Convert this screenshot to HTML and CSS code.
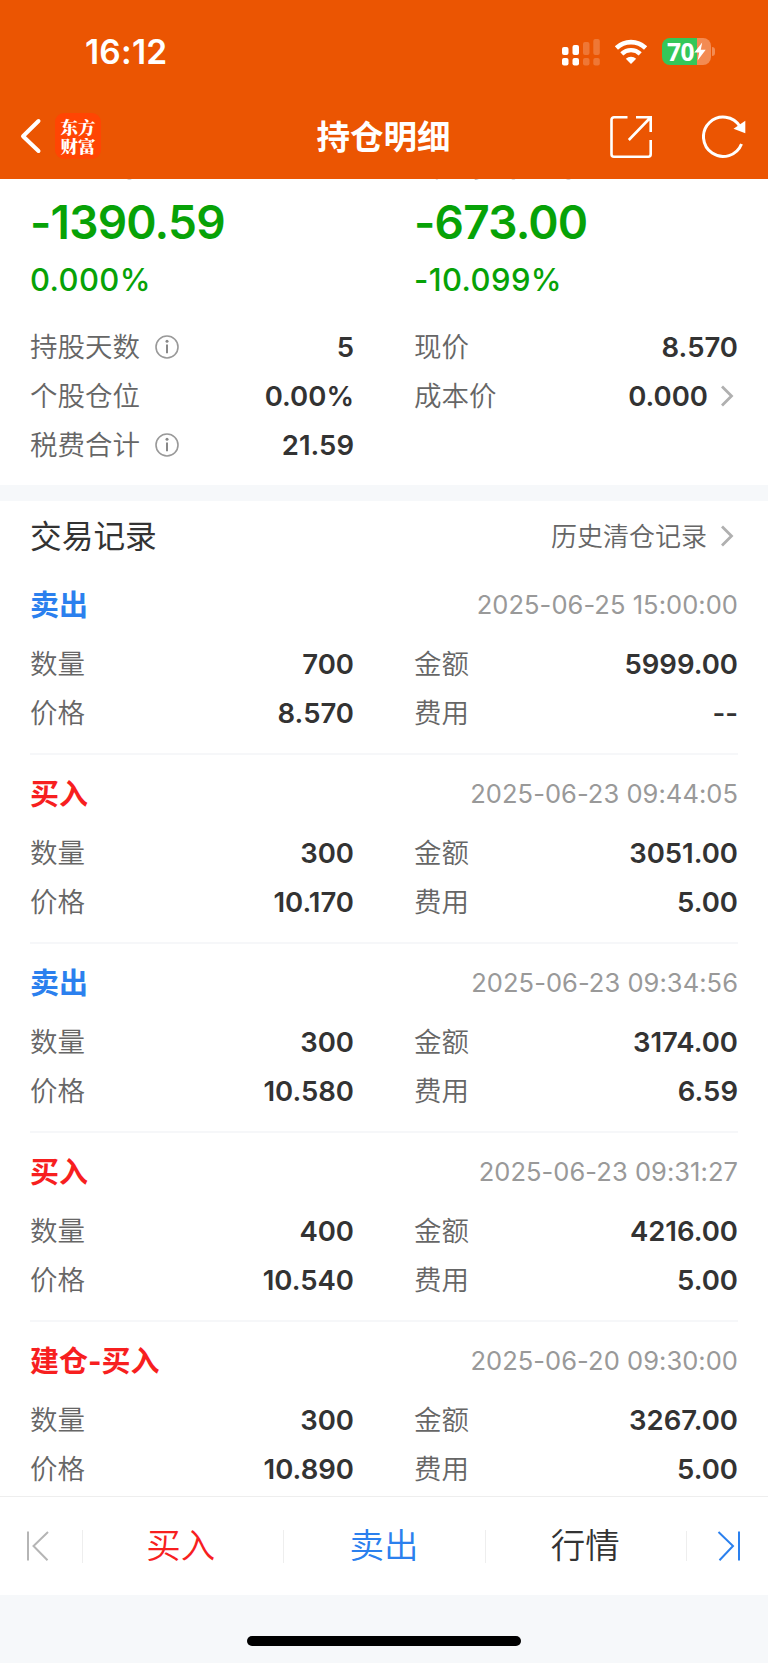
FILE: index.html
```
<!DOCTYPE html>
<html lang="zh-CN">
<head>
    <meta charset="UTF-8">
    <meta name="viewport" content="width=device-width, initial-scale=1.0">
    <title>持仓明细</title>
    <link rel="stylesheet" href="styles.css">
</head>
<body>
    <header class="header">
        <div class="statusbar">
            <span class="time">16:12</span>
            <div class="status-icons">
                <svg class="signal" width="40" height="28" viewBox="0 0 40 28" fill="#fff">
                    <rect x="1" y="9" width="6.5" height="8" rx="2"/>
                    <rect x="11.5" y="7" width="6.5" height="10" rx="2"/>
                    <rect x="1" y="20" width="6.5" height="7.5" rx="2"/>
                    <rect x="11.5" y="20" width="6.5" height="7.5" rx="2"/>
                    <g opacity="0.2">
                        <rect x="22" y="4" width="6.5" height="13" rx="2"/>
                        <rect x="32.3" y="1" width="6.5" height="16" rx="2"/>
                        <rect x="22" y="20" width="6.5" height="7.5" rx="2"/>
                        <rect x="32.3" y="20" width="6.5" height="7.5" rx="2"/>
                    </g>
                </svg>
                <svg class="wifi" width="34" height="26" viewBox="0 0 34 26">
                    <path d="M2.4 9a21 21 0 0 1 29.2 0" fill="none" stroke="#fff" stroke-width="4.6"/>
                    <path d="M7.8 14.8a13.3 13.3 0 0 1 18.4 0" fill="none" stroke="#fff" stroke-width="4.4"/>
                    <path d="M17 25l-5.2-5.2a7.6 7.6 0 0 1 10.4 0z" fill="#fff"/>
                </svg>
                <div class="battery">
                    <span>70</span>
                    <svg width="12" height="19" viewBox="0 0 12 19" fill="#fff"><path d="M8.2 0.5L0.3 10.6h4.9L3.6 18.5L11.7 7.8H6.8z"/></svg>
                </div>
                <i class="battery-cap"></i>
            </div>
        </div>
        <div class="navbar">
            <div class="nav-left">
                <svg width="22" height="36" viewBox="0 0 22 36" fill="none" stroke="#fff" stroke-width="4" stroke-linecap="round" stroke-linejoin="round"><path d="M18.5 3L3 18.2L18.5 33"/></svg>
                <div class="logo">东方<br>财富</div>
            </div>
            <h1>持仓明细</h1>
            <div class="nav-right">
                <svg width="44" height="44" viewBox="0 0 44 44" fill="none" stroke="#fff" stroke-width="2.6"><path d="M18.5 2.3H5a2.5 2.5 0 0 0-2.5 2.5v34.4A2.5 2.5 0 0 0 5 41.7h34.2a2.5 2.5 0 0 0 2.5-2.5V25M27 2.3h14.7V17M41 3L19.8 25"/></svg>
                <svg width="46" height="44" viewBox="0 0 46 44"><path d="M39.5 29A19.7 19.7 0 1 1 38 11.5" fill="none" stroke="#fff" stroke-width="3"/><path d="M43.3 5.7v12.6L31.5 13.8z" fill="#fff"/></svg>
            </div>
        </div>
    </header>

    <main class="content">
        <section class="summary">
            <div class="profit">
                <div class="col">
                    <p class="name">持仓盈亏</p>
                    <p class="big">-1390.59</p>
                    <p class="percent">0.000%</p>
                </div>
                <div class="col">
                    <p class="name">当日参考盈亏</p>
                    <p class="big">-673.00</p>
                    <p class="percent">-10.099%</p>
                </div>
            </div>
            <div class="grid">
                <div class="item">
                    <span>持股天数</span>
                    <svg class="info" width="24" height="24" viewBox="0 0 24 24"><circle cx="12" cy="12" r="11" fill="none" stroke="#999" stroke-width="1.6"/><path d="M12 9.5v8.8" stroke="#888" stroke-width="2"/><circle cx="12" cy="6.3" r="1.5" fill="#888"/></svg>
                    <b>5</b>
                </div>
                <div class="item"><span>现价</span><b>8.570</b></div>
                <div class="item"><span>个股仓位</span><b>0.00%</b></div>
                <div class="item">
                    <span>成本价</span><b>0.000</b>
                    <svg class="arrow" width="14" height="22" viewBox="0 0 14 22"><path d="M2 1.5l9.5 9.5L2 20.5"/></svg>
                </div>
                <div class="item">
                    <span>税费合计</span>
                    <svg class="info" width="24" height="24" viewBox="0 0 24 24"><circle cx="12" cy="12" r="11" fill="none" stroke="#999" stroke-width="1.6"/><path d="M12 9.5v8.8" stroke="#888" stroke-width="2"/><circle cx="12" cy="6.3" r="1.5" fill="#888"/></svg>
                    <b>21.59</b>
                </div>
            </div>
        </section>

        <section class="records">
            <div class="records-head">
                <h2>交易记录</h2>
                <a class="history"><span>历史清仓记录</span>
                    <svg class="arrow" width="14" height="22" viewBox="0 0 14 22"><path d="M2 1.5l9.5 9.5L2 20.5"/></svg>
                </a>
            </div>

            <div class="record">
                <div class="record-top"><span class="sell">卖出</span><time>2025-06-25 15:00:00</time></div>
                <div class="grid">
                    <div class="item"><span>数量</span><b>700</b></div>
                    <div class="item"><span>金额</span><b>5999.00</b></div>
                    <div class="item"><span>价格</span><b>8.570</b></div>
                    <div class="item"><span>费用</span><b>--</b></div>
                </div>
            </div>
            <div class="record">
                <div class="record-top"><span class="buy">买入</span><time>2025-06-23 09:44:05</time></div>
                <div class="grid">
                    <div class="item"><span>数量</span><b>300</b></div>
                    <div class="item"><span>金额</span><b>3051.00</b></div>
                    <div class="item"><span>价格</span><b>10.170</b></div>
                    <div class="item"><span>费用</span><b>5.00</b></div>
                </div>
            </div>
            <div class="record">
                <div class="record-top"><span class="sell">卖出</span><time>2025-06-23 09:34:56</time></div>
                <div class="grid">
                    <div class="item"><span>数量</span><b>300</b></div>
                    <div class="item"><span>金额</span><b>3174.00</b></div>
                    <div class="item"><span>价格</span><b>10.580</b></div>
                    <div class="item"><span>费用</span><b>6.59</b></div>
                </div>
            </div>
            <div class="record">
                <div class="record-top"><span class="buy">买入</span><time>2025-06-23 09:31:27</time></div>
                <div class="grid">
                    <div class="item"><span>数量</span><b>400</b></div>
                    <div class="item"><span>金额</span><b>4216.00</b></div>
                    <div class="item"><span>价格</span><b>10.540</b></div>
                    <div class="item"><span>费用</span><b>5.00</b></div>
                </div>
            </div>
            <div class="record">
                <div class="record-top"><span class="buy">建仓-买入</span><time>2025-06-20 09:30:00</time></div>
                <div class="grid">
                    <div class="item"><span>数量</span><b>300</b></div>
                    <div class="item"><span>金额</span><b>3267.00</b></div>
                    <div class="item"><span>价格</span><b>10.890</b></div>
                    <div class="item"><span>费用</span><b>5.00</b></div>
                </div>
            </div>
        </section>
    </main>

    <nav class="tabbar">
        <a class="edge prev"><svg width="24" height="30" viewBox="0 0 24 30" fill="none" stroke="#b5b5b5" stroke-width="2"><path d="M2 0.5v29M22 1L7.5 15L21.5 29.2"/></svg></a>
        <a class="tab buy">买入</a>
        <a class="tab sell">卖出</a>
        <a class="tab">行情</a>
        <a class="edge next"><svg width="24" height="30" viewBox="0 0 24 30" fill="none" stroke="#2b80ee" stroke-width="2"><path d="M22 0.5v29M1.5 1L16 15L2.5 29.2"/></svg></a>
    </nav>
    <div class="home"><i></i></div>
</body>
</html>
```

FILE: styles.css
```
* { margin: 0; padding: 0; box-sizing: border-box; }
body { width: 768px; height: 1663px; overflow: hidden; display: flex; flex-direction: column; background: #fff; color: #333; font-family: Inter, "Noto Sans CJK SC", sans-serif; }
svg { display: block; flex: none; }

.header { height: 179px; flex: none; background: #eb5502; color: #fff; }
.statusbar { height: 103px; display: flex; justify-content: space-between; padding: 0 53px 0 85px; align-items: center; }
.time { font-size: 33.5px; font-weight: 600; letter-spacing: 0.2px; }
.status-icons { display: flex; align-items: center; }
.wifi { margin: 0 14px 0 13px; }
.battery { width: 49px; height: 27px; border-radius: 8px; background: linear-gradient(90deg, #34c759 35px, #f38b52 35px); display: flex; align-items: center; padding-left: 5px; }
.battery span { font: 700 24.5px/27px "Noto Sans", sans-serif; letter-spacing: -0.5px; padding-bottom: 1px; }
.battery-cap { width: 3px; height: 9px; margin-left: 1px; border-radius: 0 3px 3px 0; background: #f38b52; }
.navbar { height: 67px; display: flex; justify-content: space-between; align-items: center; padding: 0 20px; }
.nav-left, .nav-right { width: 139px; display: flex; align-items: center; }
.nav-left { padding-bottom: 1px; }
.nav-right { justify-content: space-between; padding-top: 1px; }
.logo { width: 46px; height: 46px; margin-left: 13px; padding-top: 4px; border-radius: 9px; background: #ff4503; font: 900 17.5px/19px "Noto Serif CJK SC", "Noto Sans CJK SC", serif; text-align: center; }
h1 { font-size: 33.5px; font-weight: 600; padding: 0 1px 4px 0; }

.content { height: 1317px; flex: none; overflow: hidden; }
.grid { display: grid; grid-template-columns: 324px 324px; column-gap: 60px; grid-auto-rows: 49.2px; }
.item { display: flex; align-items: center; }
.item span { font-size: 27.5px; font-weight: 350; color: #666; padding-bottom: 3px; }
.item b { margin-left: auto; font-size: 27.5px; font-weight: 600; }
.info { margin-left: 15px; }
.arrow { fill: none; stroke: #b0b0b0; stroke-width: 2.8; margin: 0 4px 0 12px; }

.summary { height: 322px; padding: 0 30px; border-bottom: 16px solid #f6f8fa; }
.profit { display: grid; grid-template-columns: 324px 324px; column-gap: 60px; height: 143px; }
/* scrolled under the header, only its foot shows */
.name { height: 27px; margin-top: -25px; font-size: 27.5px; line-height: 27px; font-weight: 350; color: #666; }
.profit .big { font-size: 46px; line-height: 56px; font-weight: 600; margin-top: 13px; letter-spacing: -0.8px; }
.percent { font-size: 31px; line-height: 40px; font-weight: 500; margin-top: 10px; letter-spacing: 0.4px; }
.profit .big, .percent { color: #07a207; }

.records { padding: 0 30px; }
.records-head { height: 65px; padding-top: 5px; display: flex; justify-content: space-between; align-items: center; }
h2 { font-size: 31.7px; font-weight: 400; padding-bottom: 4px; }
.history { display: flex; align-items: center; font-size: 26px; font-weight: 350; color: #666; }
.history span { padding: 0 1px 3px 0; }
.record { height: 189px; padding-top: 12px; border-bottom: 2px solid #f6f7f9; }
.record-top { height: 56px; display: flex; justify-content: space-between; align-items: center; margin-bottom: 5px; padding-bottom: 3px; }
.record-top span { font-size: 29px; font-weight: 700; padding-bottom: 3px; }
.record-top time { font-size: 25.5px; color: #999; letter-spacing: 0.05px; }
.buy { color: #f71f1f; }
.sell { color: #2b80ee; }

.tabbar { height: 99px; flex: none; border-top: 1px solid #eee; display: flex; align-items: center; }
.tab { flex: 1; height: 33px; display: flex; align-items: center; justify-content: center; border-left: 1px solid #eee; font-size: 34.5px; line-height: 28px; font-weight: 350; padding: 0 1px 1px 0; }
.tab.buy { text-indent: -4px; }
.edge { width: 82px; padding-left: 26px; }
.next { border-left: 1px solid #eee; padding-left: 30px; }
.home { flex: 1; background: #f6f8fa; display: flex; justify-content: center; padding-top: 41px; }
.home i { width: 274px; height: 10px; border-radius: 5px; background: #000; }
```
